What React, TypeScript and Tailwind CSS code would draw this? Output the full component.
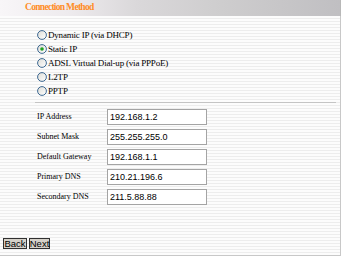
import React from "react";

const Radio = ({ checked }: { checked?: boolean }) => (
  <svg width="10" height="10" viewBox="0 0 10 10" className="shrink-0">
    <defs>
      <linearGradient id="rg" x1="0" y1="0" x2="1" y2="1">
        <stop offset="0" stopColor="#dcdcd6" />
        <stop offset="1" stopColor="#ffffff" />
      </linearGradient>
    </defs>
    <circle cx="5" cy="5" r="4.4" fill="url(#rg)" stroke="#2a5a88" strokeWidth="0.9" />
    {checked && <circle cx="5" cy="5" r="1.8" fill="#21a121" />}
  </svg>
);

const options = [
  { label: "Dynamic IP (via DHCP)", checked: false },
  { label: "Static IP", checked: true },
  { label: "ADSL Virtual Dial-up (via PPPoE)", checked: false },
  { label: "L2TP", checked: false },
  { label: "PPTP", checked: false },
];

const fields = [
  { label: "IP Address", value: "192.168.1.2" },
  { label: "Subnet Mask", value: "255.255.255.0" },
  { label: "Default Gateway", value: "192.168.1.1" },
  { label: "Primary DNS", value: "210.21.196.6" },
  { label: "Secondary DNS", value: "211.5.88.88" },
];

export default function App() {
  return (
    <div className="w-[341px] h-[257px] flex flex-col overflow-hidden font-['Liberation_Serif',serif]">
      <div className="h-[16px] shrink-0 bg-[linear-gradient(90deg,#f8f6f8_0%,#eeebee_20%,#dad8da_40%,#cecdce_65%,#c0bfc2_100%)] flex items-center pl-[25px] border-r border-[#b8b8b8]">
        <span className="text-[9.5px] tracking-[-0.7px] font-bold text-[#ff8c26] leading-none font-['Liberation_Serif',serif]">Connection Method</span>
      </div>
      <div className="flex-1 flex flex-col border-r border-b border-[#c8c8c8] mb-[1px] bg-[repeating-linear-gradient(180deg,#fcfcfc_0px,#fcfcfc_2px,#ededed_2px,#ededed_3px)]">
        <div className="flex flex-col pl-[37px] pt-[12px]">
          {options.map((o) => (
            <div key={o.label} className="h-[14px] flex items-center gap-[1px] text-[9px] tracking-[-0.2px] text-black leading-none">
              <Radio checked={o.checked} />
              <span className="font-['Liberation_Serif',serif]">{o.label}</span>
            </div>
          ))}
        </div>
        <div className="ml-[35px] mr-[4px] mt-[4px] h-px bg-[#c4c4c4]" />
        <div className="flex flex-col pl-[37px] pt-[6px] gap-[4px]">
          {fields.map((f) => (
            <div key={f.label} className="flex items-center h-[16px]">
              <span className="w-[70px] text-[8px] text-black leading-none font-['Liberation_Serif',serif]">{f.label}</span>
              <div className="w-[100px] h-[16px] bg-white border border-[#a4a4a4] flex items-center pl-[2px] text-[9px] text-black leading-none font-['Liberation_Sans_Narrow','Liberation_Sans',sans-serif]">
                {f.value}
              </div>
            </div>
          ))}
        </div>
        <div className="flex-1" />
        <div className="flex gap-[2px] pl-[3px] pb-[6px] font-['Liberation_Sans_Narrow','Liberation_Sans',sans-serif]">
          <div className="w-[24px] h-[11px] bg-[#d4d0c8] border border-[#303030] text-[9.5px] leading-none flex items-center justify-center text-black">Back</div>
          <div className="w-[21px] h-[11px] bg-[#d4d0c8] border border-[#303030] text-[9.5px] leading-none flex items-center justify-center text-black">Next</div>
        </div>
      </div>
    </div>
  );
}
